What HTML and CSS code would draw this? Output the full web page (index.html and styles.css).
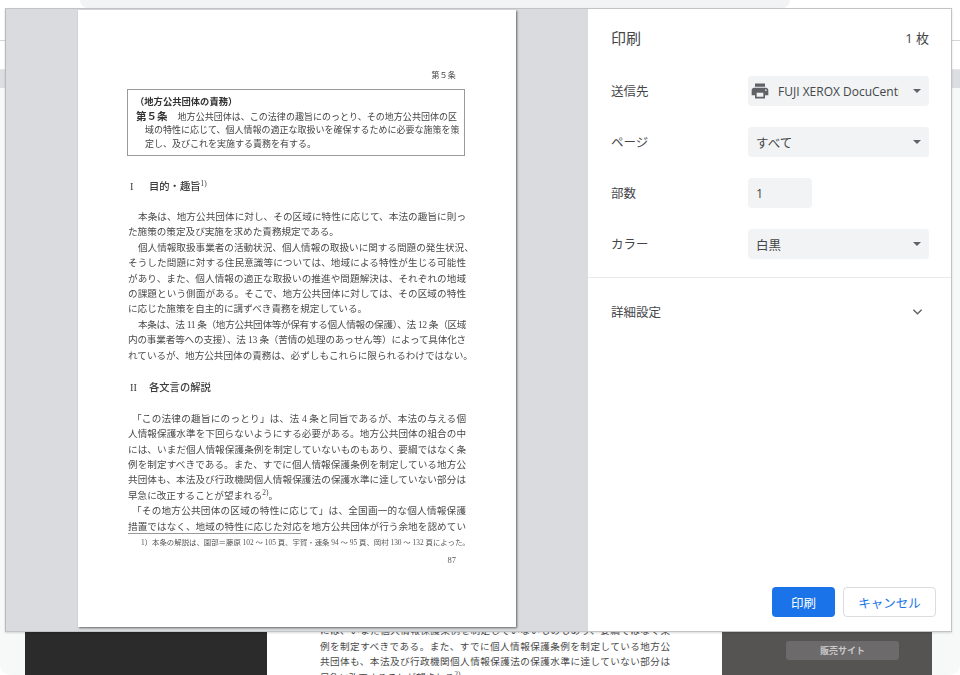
FILE: index.html
```html
<!DOCTYPE html>
<html lang="ja">
<head>
    <meta charset="UTF-8">
    <meta name="viewport" content="width=device-width, initial-scale=1.0">
    <title>印刷</title>
    <link rel="stylesheet" href="styles.css">
</head>
<body>
    <!-- page behind the print dialog -->
    <div class="backdrop">
        <div class="tabs"><div class="address"></div></div>
        <div class="toolbar"></div>
        <div class="band"></div>
        <div class="reader">
            <div class="cover"></div>
            <div class="article">
                <div class="ln">には、いまだ個人情報保護条例を制定していないものもあり、要綱ではなく条</div>
                <div class="ln">例を制定すべきである。また、すでに個人情報保護条例を制定している地方公</div>
                <div class="ln">共団体も、本法及び行政機関個人情報保護法の保護水準に達していない部分は</div>
                <div class="ln short">早急に改正することが望まれる<sup>2)</sup>。</div>
            </div>
            <div class="shop"><div class="shop-btn">販売サイト</div></div>
        </div>
    </div>

    <div class="dialog">
        <div class="preview">
            <div class="sheet">
                <div class="running-head">第５条</div>
                <div class="statute">
                    <div class="statute-title">（地方公共団体の責務）</div>
                    <div class="sl"><b>第５条</b>地方公共団体は、この法律の趣旨にのっとり、その地方公共団体の区</div>
                    <div class="sl in">域の特性に応じて、個人情報の適正な取扱いを確保するために必要な施策を策</div>
                    <div class="sl in short">定し、及びこれを実施する責務を有する。</div>
                </div>

                <h3 class="heading first"><span class="num">I</span>目的・趣旨<sup>1)</sup></h3>
                <div class="ln in">本条は、地方公共団体に対し、その区域に特性に応じて、本法の趣旨に則っ</div>
                <div class="ln short">た施策の策定及び実施を求めた責務規定である。</div>
                <div class="ln in">個人情報取扱事業者の活動状況、個人情報の取扱いに関する問題の発生状況、</div>
                <div class="ln">そうした問題に対する住民意識等については、地域による特性が生じる可能性</div>
                <div class="ln">があり、また、個人情報の適正な取扱いの推進や問題解決は、それぞれの地域</div>
                <div class="ln">の課題という側面がある。そこで、地方公共団体に対しては、その区域の特性</div>
                <div class="ln short">に応じた施策を自主的に講ずべき責務を規定している。</div>
                <div class="ln in tight-more">本条は、法 11 条（地方公共団体等が保有する個人情報の保護）、法 12 条（区域</div>
                <div class="ln tight">内の事業者等への支援）、法 13 条（苦情の処理のあっせん等）によって具体化さ</div>
                <div class="ln">れているが、地方公共団体の責務は、必ずしもこれらに限られるわけではない。</div>

                <h3 class="heading"><span class="num">II</span>各文言の解説</h3>
                <div class="ln quote">「この法律の趣旨にのっとり」は、法 4 条と同旨であるが、本法の与える個</div>
                <div class="ln">人情報保護水準を下回らないようにする必要がある。地方公共団体の組合の中</div>
                <div class="ln">には、いまだ個人情報保護条例を制定していないものもあり、要綱ではなく条</div>
                <div class="ln">例を制定すべきである。また、すでに個人情報保護条例を制定している地方公</div>
                <div class="ln">共団体も、本法及び行政機関個人情報保護法の保護水準に達していない部分は</div>
                <div class="ln short">早急に改正することが望まれる<sup>2)</sup>。</div>
                <div class="ln quote">「その地方公共団体の区域の特性に応じて」は、全国画一的な個人情報保護</div>
                <div class="ln">措置ではなく、地域の特性に応じた対応を地方公共団体が行う余地を認めてい</div>
                <div class="note-rule"></div>
                <div class="note">1）本条の解説は、園部＝藤原 102 ～ 105 頁、宇賀・速条 94 ～ 95 頁、岡村 130 ～ 132 頁によった。</div>
                <div class="folio">87</div>
            </div>
        </div>

        <div class="sidebar">
            <div class="side-head">
                <h1 class="side-title">印刷</h1>
                <span class="sheet-count">1 枚</span>
            </div>
            <div class="settings">
                <div class="row">
                    <span class="row-label">送信先</span>
                    <div class="select">
                        <svg class="print-icon" viewBox="0 0 24 24"><path d="M19 8H5c-1.66 0-3 1.34-3 3v6h4v4h12v-4h4v-6c0-1.66-1.34-3-3-3zm-3 11H8v-5h8v5zm3-7c-.55 0-1-.45-1-1s.45-1 1-1 1 .45 1 1-.45 1-1 1zm-1-9H6v4h12V3z"/></svg>
                        <span class="select-text printer-name">FUJI XEROX DocuCentre-VI</span>
                        <span class="caret"></span>
                    </div>
                </div>
                <div class="row">
                    <span class="row-label">ページ</span>
                    <div class="select"><span class="select-text">すべて</span><span class="caret"></span></div>
                </div>
                <div class="row">
                    <span class="row-label">部数</span>
                    <div class="select copies"><span class="select-text">1</span></div>
                </div>
                <div class="row">
                    <span class="row-label">カラー</span>
                    <div class="select"><span class="select-text">白黒</span><span class="caret"></span></div>
                </div>
            </div>
            <div class="more">
                <span class="row-label">詳細設定</span>
                <svg class="chevron" viewBox="0 0 12 8"><path d="M1.5 1.5 6 6l4.5-4.5"/></svg>
            </div>
            <div class="actions">
                <button class="btn btn-primary">印刷</button>
                <button class="btn btn-cancel">キャンセル</button>
            </div>
        </div>
    </div>
</body>
</html>
```

FILE: styles.css
```css
html, body {
    margin: 0;
    padding: 0;
    height: 675px;
    overflow: hidden;
    background-color: white;
    font-family: "Open Sans", "Noto Sans CJK JP", sans-serif;
}

/* line of book text, shared by the sheet and the page behind */
.ln {
    height: 15.4px;
    line-height: 15.4px;
    white-space: nowrap;
    font-family: "Liberation Serif", "Noto Sans CJK JP", serif;
    font-size: 9.6px;
    color: #4a4a4a;
    text-align: justify;
    text-align-last: justify;
}
.short { text-align-last: left; }
.in { padding-left: 10px; }
.quote { padding-left: 4px; }
.tight { letter-spacing: -0.2px; }
.tight-more { letter-spacing: -0.4px; }
sup {
    font-size: 7.5px;
    line-height: 0;
}

/* page behind */
.backdrop {
    display: flex;
    flex-direction: column;
    height: 675px;
}
.tabs {
    height: 41px;
    border-bottom: 1px solid #d4d5d7;
    box-sizing: border-box;
}
.address {
    height: 8px;
    margin: 0 170px 0 80px;
    background-color: #f1f3f4;
    border-radius: 0 0 10px 10px;
}
.toolbar {
    height: 29px;
    border-bottom: 1px solid #e4e5e7;
    box-sizing: border-box;
}
.band {
    height: 18px;
    background-color: #dcdee1;
}
.reader {
    flex: 1;
    display: flex;
    overflow: hidden;
    padding: 0 28px 0 25px;
    background-color: #f7f8f8;
    border-radius: 0 0 10px 10px;
}
.cover {
    width: 242px;
    background-color: #2b2b2b;
}
.article {
    width: 455px;
    box-sizing: border-box;
    padding: 0 52px 0 53px;
    margin-bottom: -10px;
    background-color: white;
    display: flex;
    flex-direction: column;
    justify-content: flex-end;
}
.shop {
    width: 210px;
    box-sizing: border-box;
    background-color: #565353;
    display: flex;
    flex-direction: column;
    justify-content: flex-end;
    padding: 0 33px 15px 64px;
}
.shop-btn {
    height: 19px;
    line-height: 19px;
    border-radius: 3px;
    background-color: #6c6a6a;
    color: #c9c9c9;
    font-size: 9px;
    font-weight: 700;
    text-align: center;
}

/* print dialog */
.dialog {
    position: absolute;
    left: 5px;
    top: 8px;
    width: 947px;
    height: 624px;
    display: flex;
    box-sizing: border-box;
    border: 1px solid #c2c3c5;
    border-left-color: #b8b9bb;
    background-color: white;
    box-shadow: 0 1px 2px rgba(0,0,0,0.15);
}
.preview {
    width: 582px;
    background-color: #d9dbde;
    padding: 1px 0 0 72px;
    box-sizing: border-box;
}
.sheet {
    width: 438px;
    height: 617px;
    box-sizing: border-box;
    padding: 57px 50px 0 50px;
    background-color: white;
    box-shadow: 1px 1px 2px rgba(0,0,0,0.55);
    filter: blur(0.3px);
}
.running-head {
    height: 15px;
    line-height: 15px;
    padding-right: 10px;
    text-align: right;
    font-size: 8px;
    letter-spacing: 0.2px;
    color: #444;
}
.statute {
    margin: 7px 1px 0 -1px;
    height: 67px;
    box-sizing: border-box;
    padding: 5px 7px 0 8px;
    border: 1px solid #9a9a9a;
}
.statute-title {
    height: 14px;
    line-height: 14px;
    font-size: 9.3px;
    font-weight: 700;
    color: #333;
    margin-left: -1px;
}
.sl {
    height: 14px;
    line-height: 14px;
    white-space: nowrap;
    font-family: "Liberation Serif", "Noto Sans CJK JP", serif;
    font-size: 9px;
    color: #444;
    text-align: justify;
    text-align-last: justify;
}
.sl.short { text-align-last: left; }
.sl.in { padding-left: 9px; }
.sl b {
    font-family: "Noto Sans CJK JP", sans-serif;
    font-size: 10.5px;
    color: #333;
    margin-right: 10px;
}
.heading {
    margin: 15px 0 13px 0;
    height: 20px;
    line-height: 20px;
    font-family: "Liberation Serif", "Noto Sans CJK JP", serif;
    font-size: 10.3px;
    font-weight: 500;
    color: #3c3c3c;
}
.heading.first { margin-top: 21px; margin-bottom: 12px; }
.num {
    display: inline-block;
    width: 21px;
    padding-left: 2px;
    box-sizing: border-box;
}
.note-rule {
    width: 173px;
    height: 1px;
    margin-top: -1px;
    background-color: #999;
}
.note {
    margin: 3px -6px 0 13px;
    height: 12px;
    line-height: 12px;
    white-space: nowrap;
    font-family: "Liberation Serif", "Noto Sans CJK JP", serif;
    font-size: 7.4px;
    color: #555;
}
.folio {
    margin-top: 6px;
    padding-right: 10px;
    text-align: right;
    font-family: "Liberation Serif", serif;
    font-size: 8.5px;
    color: #555;
}

/* settings column */
.sidebar {
    flex: 1;
    display: flex;
    flex-direction: column;
    color: #444649;
}
.side-head {
    display: flex;
    justify-content: space-between;
    align-items: center;
    height: 56px;
    padding: 0 22px 0 23px;
}
.side-title {
    margin: 0;
    font-size: 15px;
    font-weight: 400;
}
.sheet-count { font-size: 13px; }
.settings {
    display: flex;
    flex-direction: column;
    gap: 21px;
    padding: 11px 22px 18px 23px;
    border-bottom: 1px solid #e8eaed;
}
.row {
    display: flex;
    align-items: center;
    height: 30px;
}
.row-label {
    width: 137px;
    padding-bottom: 2px;
    font-size: 12.5px;
}
.select {
    width: 181px;
    height: 30px;
    box-sizing: border-box;
    display: flex;
    align-items: center;
    padding: 0 8px 0 8px;
    border-radius: 4px;
    background-color: #f1f3f4;
    font-size: 12.5px;
}
.select.copies { width: 64px; }
.select-text {
    flex: 1;
    overflow: hidden;
    white-space: nowrap;
}
.printer-name { font-size: 12px; }
.print-icon {
    width: 20px;
    height: 20px;
    margin: 0 8px 0 -6px;
    fill: #5f6368;
}
.caret {
    margin-left: 14px;
    border-left: 4.5px solid transparent;
    border-right: 4.5px solid transparent;
    border-top: 4.5px solid #5f6368;
}
.more {
    display: flex;
    align-items: center;
    justify-content: space-between;
    height: 68px;
    padding: 0 28px 0 23px;
}
.chevron {
    width: 11px;
    height: 8px;
    fill: none;
    stroke: #5f6368;
    stroke-width: 1.6;
}
.actions {
    margin-top: auto;
    display: flex;
    justify-content: flex-end;
    gap: 8px;
    padding: 0 15px 14px 0;
}
.btn {
    height: 30px;
    padding: 0;
    border-radius: 4px;
    font-family: inherit;
    font-size: 12.5px;
}
.btn-primary {
    width: 63px;
    border: none;
    background-color: #1a73e8;
    color: white;
}
.btn-cancel {
    width: 93px;
    border: 1px solid #dadce0;
    background-color: white;
    color: #1a73e8;
}
```
